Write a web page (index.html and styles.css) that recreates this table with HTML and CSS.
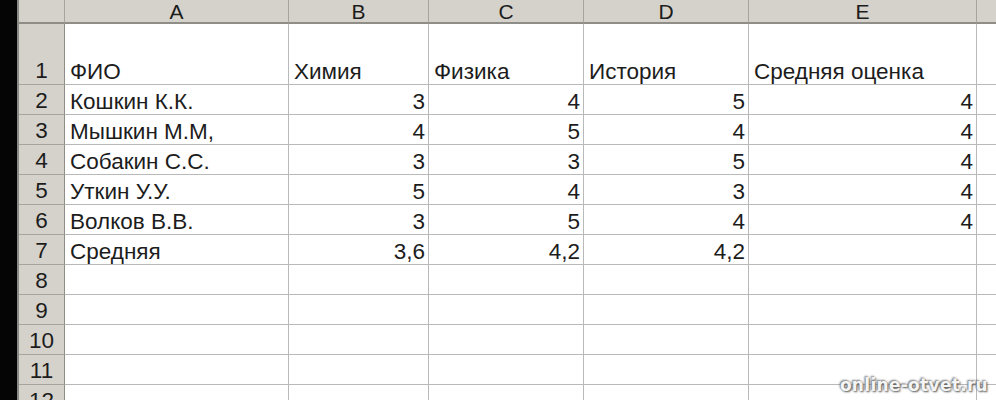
FILE: index.html
```html
<!DOCTYPE html>
<html lang="ru">
<head>
<meta charset="utf-8">
<title>Excel</title>
<link rel="stylesheet" href="styles.css">
</head>
<body>
<div class="screen">
  <div class="edge"></div>
  <div class="sheet">
    <div class="corner"></div>
    <div class="colh">A</div>
    <div class="colh">B</div>
    <div class="colh">C</div>
    <div class="colh">D</div>
    <div class="colh">E</div>
    <div class="colh last"></div>

    <div class="rowh">1</div>
    <div class="cell">ФИО</div>
    <div class="cell">Химия</div>
    <div class="cell">Физика</div>
    <div class="cell">История</div>
    <div class="cell">Средняя оценка</div>
    <div class="cell last"></div>

    <div class="rowh">2</div>
    <div class="cell">Кошкин К.К.</div>
    <div class="cell num">3</div>
    <div class="cell num">4</div>
    <div class="cell num">5</div>
    <div class="cell num">4</div>
    <div class="cell last"></div>

    <div class="rowh">3</div>
    <div class="cell">Мышкин М.М,</div>
    <div class="cell num">4</div>
    <div class="cell num">5</div>
    <div class="cell num">4</div>
    <div class="cell num">4</div>
    <div class="cell last"></div>

    <div class="rowh">4</div>
    <div class="cell">Собакин С.С.</div>
    <div class="cell num">3</div>
    <div class="cell num">3</div>
    <div class="cell num">5</div>
    <div class="cell num">4</div>
    <div class="cell last"></div>

    <div class="rowh">5</div>
    <div class="cell">Уткин У.У.</div>
    <div class="cell num">5</div>
    <div class="cell num">4</div>
    <div class="cell num">3</div>
    <div class="cell num">4</div>
    <div class="cell last"></div>

    <div class="rowh">6</div>
    <div class="cell">Волков В.В.</div>
    <div class="cell num">3</div>
    <div class="cell num">5</div>
    <div class="cell num">4</div>
    <div class="cell num">4</div>
    <div class="cell last"></div>

    <div class="rowh">7</div>
    <div class="cell">Средняя</div>
    <div class="cell num">3,6</div>
    <div class="cell num">4,2</div>
    <div class="cell num">4,2</div>
    <div class="cell"></div>
    <div class="cell last"></div>

    <div class="rowh">8</div>
    <div class="cell"></div><div class="cell"></div><div class="cell"></div><div class="cell"></div><div class="cell"></div><div class="cell last"></div>
    <div class="rowh">9</div>
    <div class="cell"></div><div class="cell"></div><div class="cell"></div><div class="cell"></div><div class="cell"></div><div class="cell last"></div>
    <div class="rowh">10</div>
    <div class="cell"></div><div class="cell"></div><div class="cell"></div><div class="cell"></div><div class="cell"></div><div class="cell last"></div>
    <div class="rowh">11</div>
    <div class="cell"></div><div class="cell"></div><div class="cell"></div><div class="cell"></div><div class="cell"></div><div class="cell last"></div>
    <div class="rowh">12</div>
    <div class="cell"></div><div class="cell"></div><div class="cell"></div><div class="cell"></div><div class="cell"></div><div class="cell last"></div>
  </div>
  <div class="watermark">online-otvet.ru</div>
</div>
</body>
</html>
```

FILE: styles.css
```css
* { box-sizing: border-box; }
html, body { margin: 0; padding: 0; background: #fff; }
body { font-family: "Liberation Sans", Arial, sans-serif; color: #1c1c1c; }

.screen {
  position: relative;
  width: 996px;
  height: 400px;
  overflow: hidden;
  display: flex;
}

.edge {
  width: 19px;
  flex: none;
  background: #050505;
  border-right: 2px solid #8a8a86;
}

.sheet {
  flex: 1;
  display: grid;
  grid-template-columns: 46px 224px 140px 155px 165px 228px 1fr;
  grid-template-rows: 24px 61px repeat(11, 30px);
  font-size: 22.5px;
}

.corner, .colh {
  background: #d5d2cb;
  border-right: 1px solid #a6a49e;
  border-bottom: 2px solid #8f8d88;
}
.colh {
  font-size: 21px;
  display: flex;
  align-items: center;
  justify-content: center;
  line-height: 1;
  padding-top: 1px;
}
.colh.last { border-right: none; }

.rowh {
  background: #d5d2cb;
  border-right: 1px solid #8f8d88;
  border-bottom: 1px solid #a6a49e;
  display: flex;
  align-items: flex-end;
  justify-content: center;
  line-height: 24px;
  padding-bottom: 1px;
}

.cell {
  border-right: 1px solid #b9b9b9;
  border-bottom: 1px solid #b9b9b9;
  display: flex;
  align-items: flex-end;
  padding: 0 3px 0 5px;
  line-height: 24px;
  white-space: nowrap;
  overflow: visible;
}
.cell.num { justify-content: flex-end; }
.cell.last { border-right: none; }

.watermark {
  position: absolute;
  right: 8px;
  bottom: 5px;
  font-family: "DejaVu Sans", sans-serif;
  font-weight: bold;
  font-size: 17px;
  letter-spacing: 0.3px;
  color: #f4f4f4;
  text-shadow: 1px 1px 2px #555, -1px -1px 2px #777;
}
```
